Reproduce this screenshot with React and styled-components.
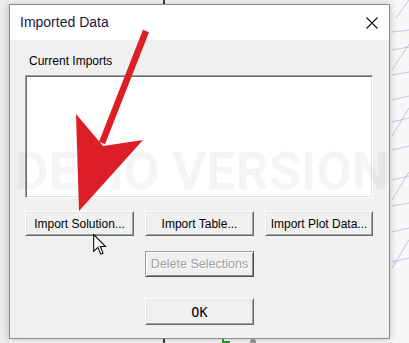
import React from "react";
import styled, { createGlobalStyle } from "styled-components";

const Global = createGlobalStyle`
  html, body { margin: 0; padding: 0; width: 409px; height: 343px; overflow: hidden; background: #f5f5f5; }
  * { box-sizing: border-box; }
`;

const Stage = styled.div`
  position: relative;
  width: 409px;
  height: 343px;
  padding: 4px 0 0 9px;
  font-family: "Liberation Sans", Arial, sans-serif;
`;

const Backdrop = styled.svg`
  position: absolute;
  inset: 0;
  z-index: 0;
`;

const Overlay = styled.svg`
  position: absolute;
  left: 0;
  top: 0;
  z-index: 3;
  pointer-events: none;
`;

const Dialog = styled.div`
  position: relative;
  z-index: 1;
  width: 381px;
  height: 335px;
  border: 1px solid #8c8c8c;
  background: #f0f0f0;
  box-shadow: 0 0 7px rgba(0, 0, 0, 0.25);
  display: flex;
  flex-direction: column;
`;

const TitleBar = styled.div`
  height: 35px;
  background: #ffffff;
  display: flex;
  align-items: center;
  justify-content: space-between;
  padding: 0 11px 0 10px;
`;

const Title = styled.span`
  font-family: "Liberation Sans", "Segoe UI", sans-serif;
  font-size: 14px;
  color: #18183a;
  line-height: 18px;
  margin-top: -1px;
`;

const Body = styled.div`
  flex: 1;
  padding: 14px 15px 0 15px;
  display: flex;
  flex-direction: column;
`;

const Label = styled.div`
  font-size: 12px;
  line-height: 14px;
  margin-left: 4px;
  color: #000;
`;

const ListBox = styled.div`
  margin-top: 7px;
  width: 348px;
  height: 123px;
  background: #fff;
  border: 1px solid;
  border-color: #a0a0a0 #ffffff #ffffff #a0a0a0;
  box-shadow: inset 1px 1px 0 #696969, inset -1px -1px 0 #e3e3e3;
`;

const ButtonGrid = styled.div`
  display: grid;
  grid-template-columns: 109px 109px 108px;
  column-gap: 11px;
  margin-top: 13px;
`;

const Button = styled.div`
  grid-column: ${(p) => p.col || "auto"};
  margin-top: ${(p) => p.mt || 0}px;
  height: ${(p) => p.h || 25}px;
  display: flex;
  align-items: center;
  justify-content: center;
  background: #f0f0f0;
  border: 1px solid;
  border-color: #ffffff #696969 #696969 #ffffff;
  box-shadow: inset 1px 1px 0 #e3e3e3, inset -1px -1px 0 #a0a0a0;
  font-size: 12px;
  color: #000;
  white-space: nowrap;
`;

const DisabledButton = styled(Button)`
  border-color: #a0a0a0 #505050 #505050 #a0a0a0;
  box-shadow: inset 1px 1px 0 #ffffff, inset -1px -1px 0 #8a8a8a;
  color: #a0a0a0;
  text-shadow: 1px 1px 0 #ffffff;
  font-size: 12.5px;
`;

const OkText = styled.span`
  font-family: "DejaVu Sans Mono", monospace;
  font-size: 13.5px;
`;

const Watermark = styled.div`
  position: absolute;
  left: 15px;
  top: 146px;
  z-index: 2;
  font-family: Roboto, "Liberation Sans", sans-serif;
  font-weight: 700;
  font-size: 52px;
  line-height: 52px;
  color: rgba(0, 0, 0, 0.04);
  white-space: nowrap;
  pointer-events: none;
`;

const Cursor = styled.svg`
  position: absolute;
  left: 92px;
  top: 234px;
  z-index: 4;
`;

function CloseIcon() {
  return (
    <svg width="12" height="12" viewBox="0 0 12 12">
      <path d="M0.5 0.5 L11.5 11.5 M11.5 0.5 L0.5 11.5" stroke="#111" strokeWidth="1.1" fill="none" />
    </svg>
  );
}

export default function App() {
  return (
    <Stage>
      <Global />
      <Backdrop width="409" height="343">
        <rect x="0" y="0" width="409" height="343" fill="#f7f7f7" />
        <rect x="0" y="0" width="9" height="343" fill="#ececec" />
        <line x1="164" y1="0" x2="164" y2="343" stroke="#3a3a3a" strokeWidth="2" />
        <g stroke="#a8a4d4" strokeWidth="0.8" fill="none" opacity="0.75">
          <path d="M392 32 L409 30" />
          <path d="M392 50 L409 47" />
          <path d="M392 75 L409 72" />
          <path d="M392 100 L409 96" />
          <path d="M392 122 L409 118" />
          <path d="M392 150 L409 146" />
          <path d="M392 180 L409 176" />
          <path d="M392 206 L409 203" />
          <path d="M392 232 L409 228" />
          <path d="M392 262 L409 258" />
          <path d="M396 18 L409 0" />
          <path d="M392 70 L409 44" />
          <path d="M392 136 L409 108" />
          <path d="M392 200 L409 172" />
          <path d="M392 268 L409 240" />
        </g>
        <path d="M223 336 L223 343 M223 342 L230 342" stroke="#2aa02a" strokeWidth="2" />
        <circle cx="253" cy="342" r="3" fill="#9a9a9a" />
      </Backdrop>

      <Dialog>
        <TitleBar>
          <Title>Imported Data</Title>
          <CloseIcon />
        </TitleBar>
        <Body>
          <Label>Current Imports</Label>
          <ListBox />
          <ButtonGrid>
            <Button>Import Solution...</Button>
            <Button>Import Table...</Button>
            <Button>Import Plot Data...</Button>
            <DisabledButton col="2" mt={15} h={26}>Delete Selections</DisabledButton>
            <Button col="2" mt={21} h={27}>
              <OkText>OK</OkText>
            </Button>
          </ButtonGrid>
        </Body>
      </Dialog>

      <Watermark>DEMO VERSION</Watermark>

      <Overlay width="409" height="343">
        <line x1="146" y1="31" x2="102" y2="143" stroke="#dc1f27" strokeWidth="6.5" />
        <polygon points="76,114 103,146 143,140 79,211" fill="#dc1f27" />
      </Overlay>

      <Cursor width="16" height="22" viewBox="0 0 13 21">
        <path
          d="M0.5 0.5 L0.5 16.5 L4.5 12.8 L7.2 19.2 L9.4 18.3 L6.8 12 L11.8 12 Z"
          fill="#fff"
          stroke="#000"
          strokeWidth="1"
          strokeLinejoin="miter"
        />
      </Cursor>
    </Stage>
  );
}
